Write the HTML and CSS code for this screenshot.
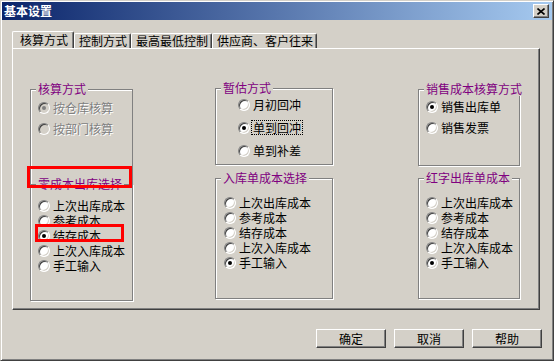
FILE: index.html
```html
<!DOCTYPE html>
<html lang="zh-CN">
<head>
    <meta charset="UTF-8">
    <title>基本设置</title>
    <link rel="stylesheet" href="styles.css">
</head>
<body>
    <div class="window">
        <div class="titlebar">
            <span class="title">基本设置</span>
            <span class="close">
                <svg width="8" height="7" viewBox="0 0 8 7"><path d="M0.5 0.5 L7.5 6.5 M7.5 0.5 L0.5 6.5" stroke="#000" stroke-width="1.6" fill="none"/></svg>
            </span>
        </div>

        <div class="tabs">
            <div class="tab active">核算方式</div>
            <div class="tab">控制方式</div>
            <div class="tab">最高最低控制</div>
            <div class="tab">供应商、客户往来</div>
        </div>

        <div class="panel">
            <div class="col col-left">
                <div class="group g-acct">
                    <span class="group-title">核算方式</span>
                    <div class="opt disabled"><span class="radio checked"></span>按仓库核算</div>
                    <div class="opt disabled"><span class="radio"></span>按部门核算</div>
                </div>
                <div class="group g-zero">
                    <span class="group-title">零成本出库选择</span>
                    <div class="opt"><span class="radio"></span>上次出库成本</div>
                    <div class="opt"><span class="radio"></span>参考成本</div>
                    <div class="opt"><span class="radio checked"></span>结存成本</div>
                    <div class="opt"><span class="radio"></span>上次入库成本</div>
                    <div class="opt"><span class="radio"></span>手工输入</div>
                </div>
            </div>

            <div class="col col-mid">
                <div class="group g-est">
                    <span class="group-title">暂估方式</span>
                    <div class="opt"><span class="radio"></span>月初回冲</div>
                    <div class="opt"><span class="radio checked"></span><span class="focus">单到回冲</span></div>
                    <div class="opt"><span class="radio"></span>单到补差</div>
                </div>
                <div class="group g-in">
                    <span class="group-title">入库单成本选择</span>
                    <div class="opt"><span class="radio"></span>上次出库成本</div>
                    <div class="opt"><span class="radio"></span>参考成本</div>
                    <div class="opt"><span class="radio"></span>结存成本</div>
                    <div class="opt"><span class="radio"></span>上次入库成本</div>
                    <div class="opt"><span class="radio checked"></span>手工输入</div>
                </div>
            </div>

            <div class="col col-right">
                <div class="group g-sale">
                    <span class="group-title">销售成本核算方式</span>
                    <div class="opt"><span class="radio checked"></span>销售出库单</div>
                    <div class="opt"><span class="radio"></span>销售发票</div>
                </div>
                <div class="group g-red">
                    <span class="group-title">红字出库单成本</span>
                    <div class="opt"><span class="radio"></span>上次出库成本</div>
                    <div class="opt"><span class="radio"></span>参考成本</div>
                    <div class="opt"><span class="radio"></span>结存成本</div>
                    <div class="opt"><span class="radio"></span>上次入库成本</div>
                    <div class="opt"><span class="radio checked"></span>手工输入</div>
                </div>
            </div>
        </div>

        <div class="buttons">
            <button class="btn">确定</button>
            <button class="btn">取消</button>
            <button class="btn">帮助</button>
        </div>

        <div class="mark mark-title"></div>
        <div class="mark mark-item"></div>
    </div>
</body>
</html>
```

FILE: styles.css
```css
* { box-sizing: border-box; }
body {
    margin: 0;
    background: #d4d0c8;
    font-family: "Noto Sans CJK SC", "Liberation Sans", sans-serif;
    font-size: 12px;
    color: #000;
}
.window {
    position: relative;
    width: 554px;
    height: 361px;
    padding: 1px;
    background: #d4d0c8;
    border: 1px solid;
    border-color: #d4d0c8 #404040 #404040 #d4d0c8;
    box-shadow: inset 1px 1px #fff, inset -1px -1px #808080;
}

/* title bar */
.titlebar {
    height: 18px;
    display: flex;
    align-items: center;
    justify-content: space-between;
    padding: 0 3px 0 2px;
    background: linear-gradient(to right, #0a246a, #a6caf0);
    color: #fff;
    font-weight: bold;
    line-height: 18px;
}
.close {
    width: 16px;
    height: 14px;
    display: flex;
    align-items: center;
    justify-content: center;
    background: #d4d0c8;
    border: 1px solid;
    border-color: #fff #404040 #404040 #fff;
    box-shadow: inset -1px -1px #808080;
}

/* tabs */
.tabs {
    height: 28px;
    display: flex;
    align-items: flex-end;
    padding-left: 10px;
}
.tab {
    height: 15px;
    padding: 0 3px 0 4px;
    line-height: 14px;
    white-space: nowrap;
    border: 1px solid;
    border-bottom: 0;
    border-color: #fff #404040 transparent #fff;
    border-radius: 2px 2px 0 0;
    box-shadow: inset -1px 0 #808080;
}
.tab.active {
    height: 17px;
    padding: 0 5px 0 7px;
    line-height: 15px;
}

/* tab page */
.panel {
    width: 528px;
    height: 262px;
    margin-left: 10px;
    padding-top: 39px;
    display: flex;
    align-items: flex-start;
    border: 1px solid;
    border-color: #fff #404040 #404040 #fff;
    box-shadow: inset -1px -1px #808080;
}
.col { display: flex; flex-direction: column; }
.col-left { width: 103px; margin: 1px 0 0 17px; }
.col-mid { width: 118px; margin-left: 82px; }
.col-right { width: 102px; margin: 1px 0 0 85px; }

.group {
    position: relative;
    display: flex;
    flex-direction: column;
    border: 1px solid #808080;
    box-shadow: inset 1px 1px #fff, 1px 1px #fff;
    padding-left: 7px;
}
.group-title {
    position: absolute;
    top: -8px;
    left: 5px;
    padding: 0 2px;
    background: #d4d0c8;
    color: #800080;
    line-height: 14px;
    white-space: nowrap;
}
.g-acct { height: 95px; border-bottom: 0; box-shadow: inset 1px 1px #fff; padding-top: 10px; gap: 6px; }
.g-zero { height: 117px; padding-top: 13px; }
.g-est { height: 77px; padding: 8px 0 0 22px; gap: 8px; }
.g-in { height: 121px; margin-top: 13px; padding: 16px 0 0 8px; }
.g-sale { height: 77px; padding-top: 9px; gap: 6px; }
.g-red { height: 121px; margin-top: 12px; padding-top: 16px; }

/* radio options */
.opt {
    display: flex;
    align-items: center;
    gap: 3px;
    height: 15px;
    line-height: 15px;
    white-space: nowrap;
}
.radio {
    position: relative;
    flex: none;
    width: 12px;
    height: 12px;
    border-radius: 50%;
    background: #fff;
    border: 1px solid;
    border-color: #808080 #fff #fff #808080;
    box-shadow: inset 1px 1px #404040, inset -1px -1px #d4d0c8;
}
.radio.checked::after {
    content: "";
    position: absolute;
    left: 3px;
    top: 3px;
    width: 4px;
    height: 4px;
    border-radius: 50%;
    background: #000;
}
.opt.disabled { color: #808080; text-shadow: 1px 1px #fff; }
.opt.disabled .radio { background: #d4d0c8; }
.opt.disabled .radio.checked::after { background: #808080; }
.focus {
    margin-left: -1px;
    padding: 0 1px;
    line-height: 13px;
    outline: 1px dotted #000;
}

/* dialog buttons */
.buttons {
    display: flex;
    justify-content: flex-end;
    gap: 8px;
    margin-top: 19px;
    padding-right: 10px;
}
.btn {
    width: 70px;
    height: 19px;
    padding: 0;
    background: #d4d0c8;
    font: inherit;
    line-height: 16px;
    color: #000;
    border: 1px solid;
    border-color: #fff #404040 #404040 #fff;
    box-shadow: inset -1px -1px #808080;
}

/* red annotation boxes */
.mark {
    position: absolute;
    border: 3px solid #f00;
}
.mark-title { left: 26px; top: 165px; width: 105px; height: 22px; }
.mark-item { left: 34px; top: 223px; width: 89px; height: 18px; }
```
